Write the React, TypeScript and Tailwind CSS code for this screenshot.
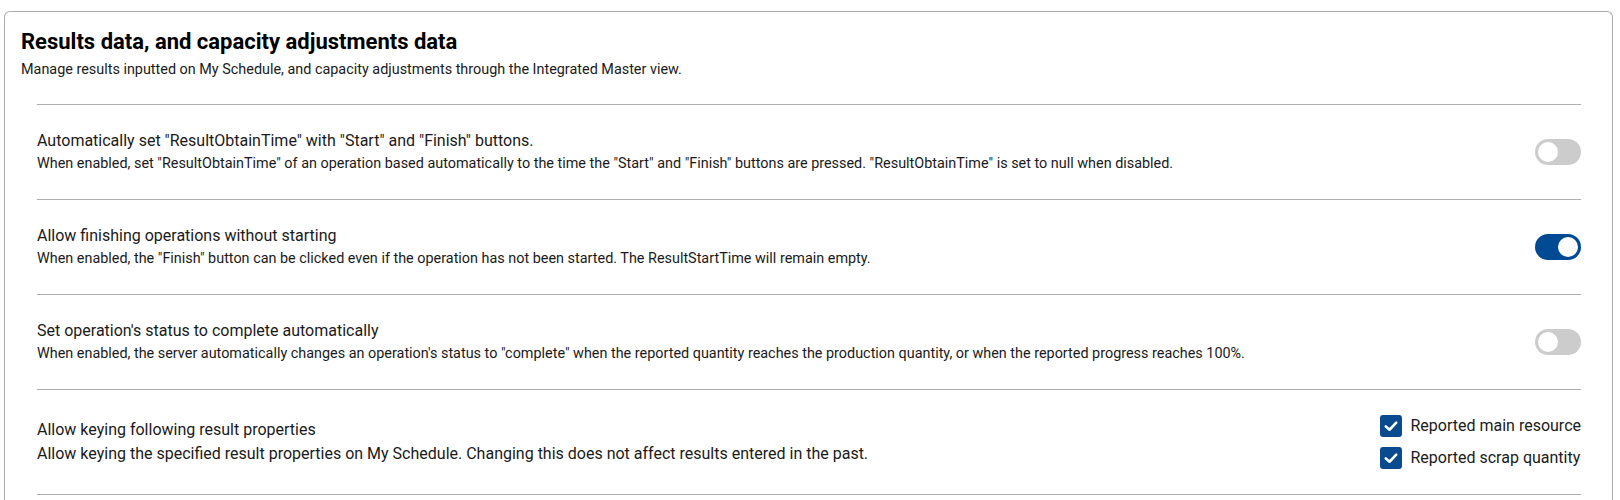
import * as React from 'react';

type ToggleRow = {
  title: string;
  description: string;
  enabled: boolean;
};

const toggleRows: ToggleRow[] = [
  {
    title: 'Automatically set "ResultObtainTime" with "Start" and "Finish" buttons.',
    description:
      'When enabled, set "ResultObtainTime" of an operation based automatically to the time the "Start" and "Finish" buttons are pressed. "ResultObtainTime" is set to null when disabled.',
    enabled: false,
  },
  {
    title: 'Allow finishing operations without starting',
    description:
      'When enabled, the "Finish" button can be clicked even if the operation has not been started. The ResultStartTime will remain empty.',
    enabled: true,
  },
  {
    title: "Set operation's status to complete automatically",
    description:
      'When enabled, the server automatically changes an operation\'s status to "complete" when the reported quantity reaches the production quantity, or when the reported progress reaches 100%.',
    enabled: false,
  },
];

function Toggle({ on, onClick }: { on: boolean; onClick: () => void }) {
  return (
    <button
      type="button"
      onClick={onClick}
      className={`relative flex h-[26px] w-[46px] shrink-0 items-center rounded-full px-[3px] ${
        on ? 'justify-end bg-[#004a93]' : 'justify-start bg-[#cccccc]'
      }`}
    >
      <span className="h-5 w-5 rounded-full bg-white" />
    </button>
  );
}

function Checkbox({ checked, label, onClick }: { checked: boolean; label: string; onClick: () => void }) {
  return (
    <label className="flex h-8 cursor-pointer items-center gap-[9px]" onClick={onClick}>
      <span
        className={`flex h-[22px] w-[22px] items-center justify-center rounded-[3px] ${
          checked ? 'bg-[#0a4a8f]' : 'border-2 border-[#777] bg-white'
        }`}
      >
        {checked && (
          <svg viewBox="0 0 24 24" className="h-[18px] w-[18px]" fill="none" stroke="white" strokeWidth={3.4} strokeLinecap="round" strokeLinejoin="round">
            <polyline points="5 12.5 10 17 19 7.5" />
          </svg>
        )}
      </span>
      <span className="text-base text-[#1a1a1a]">{label}</span>
    </label>
  );
}

export default function App() {
  const [toggles, setToggles] = React.useState(toggleRows.map(r => r.enabled));
  const [mainResource, setMainResource] = React.useState(true);
  const [scrapQty, setScrapQty] = React.useState(true);

  return (
    <div className="min-h-[500px] bg-white pl-1 pr-[7px] pt-[11px] font-['Roboto',sans-serif] text-[#1a1a1a]">
      <div className="rounded-t-md border border-b-0 border-[#aaaaaa] px-4 pt-4 pb-6">
        <h2 className="text-[22px] leading-7 font-bold text-black">Results data, and capacity adjustments data</h2>
        <p className="mt-1 text-[14.4px] leading-5">
          Manage results inputted on My Schedule, and capacity adjustments through the Integrated Master view.
        </p>

        <div className="mt-6 ml-4 mr-[15px] border-b border-[#b0b0b0]">
          {toggleRows.map((row, i) => (
            <div key={row.title} className="flex items-center justify-between border-t border-[#b0b0b0] py-6">
              <div>
                <div className="text-base leading-6">{row.title}</div>
                <div className="text-[14.4px] leading-[22px]">{row.description}</div>
              </div>
              <Toggle
                on={toggles[i]}
                onClick={() => setToggles(t => t.map((v, j) => (j === i ? !v : v)))}
              />
            </div>
          ))}

          {/* Result properties */}
          <div className="flex items-center justify-between border-t border-[#b0b0b0] py-5">
            <div>
              <div className="text-base leading-6">Allow keying following result properties</div>
              <div className="text-base leading-6">
                Allow keying the specified result properties on My Schedule. Changing this does not affect results entered in the past.
              </div>
            </div>
            <div className="flex flex-col">
              <Checkbox checked={mainResource} label="Reported main resource" onClick={() => setMainResource(v => !v)} />
              <Checkbox checked={scrapQty} label="Reported scrap quantity" onClick={() => setScrapQty(v => !v)} />
            </div>
          </div>
        </div>
      </div>
    </div>
  );
}
